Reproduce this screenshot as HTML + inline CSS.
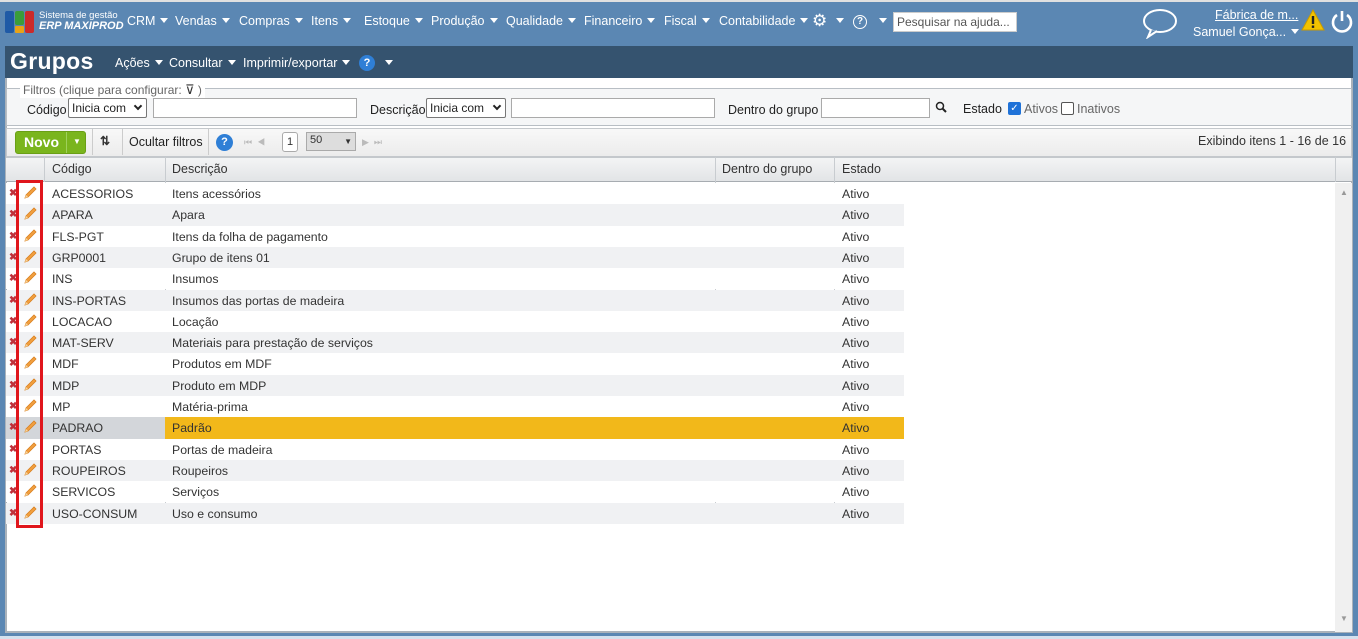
<!DOCTYPE html>
<html><head><meta charset="utf-8"><style>
*{box-sizing:border-box;margin:0;padding:0}
body{width:1358px;height:639px;overflow:hidden;background:#d4e1ee;font-family:"Liberation Sans",sans-serif;font-size:12.3px;color:#333;position:relative}
.abs{position:absolute;white-space:nowrap}
#top{left:0;top:0;width:1358px;height:44px;background:#5b87b3;border-top:2px solid #e0e0e0}
.menu{color:#fff;font-size:12.5px;top:14px}
.tri{display:inline-block;border-left:4px solid transparent;border-right:4px solid transparent;border-top:5px solid #fff;vertical-align:middle;margin-left:5px;margin-top:-2px}
#frame{left:0;top:44px;width:1358px;height:592px;background:#5b87b3}
#inner{left:5px;top:46px;width:1348px;height:587px;border:2px solid #aab2ba;background:#fff}
#title{left:5px;top:46px;width:1348px;height:32px;background:#35536f}
.tb{color:#fff;font-size:12.5px;top:56px}
#filters{left:6px;top:88px;width:1346px;height:38px;border:1px solid #b8bec4;background:#f5f6f7}
.lbl{font-size:12.5px;color:#222}
.sel{border:1px solid #777;border-radius:2px;background:#fff;height:20px;font-size:12px;padding:2px 3px;color:#222;overflow:hidden}
.inp{border:1px solid #aaa;background:#fff;height:20px}
#tool{left:6px;top:128px;width:1346px;height:29px;background:linear-gradient(#f8f8f8,#ececec);border:1px solid #c4c8cc}
#head{left:6px;top:157px;width:1346px;height:25px;background:linear-gradient(#f3f4f5,#e2e4e6);border-top:1px solid #c4c8cc;border-bottom:1px solid #a7acb1}
.hc{top:162px;font-size:12.5px;color:#333}
.vl{width:1px;background:#c8ccd0}
.row{left:6px;width:898px;height:21.3px}
.cell{font-size:12.3px;color:#333}
.chev{position:absolute;right:5px;top:4px;width:6px;height:6px;border-right:2px solid #222;border-bottom:2px solid #222;transform:rotate(45deg)}
</style></head><body>
<div id="top" class="abs"></div>
<div class="abs" style="left:5px;top:11px;width:9px;height:22px;background:#1f5aa6;border-radius:2px"></div>
<div class="abs" style="left:15px;top:11px;width:9px;height:14px;background:#3a9d3a;border-radius:2px"></div>
<div class="abs" style="left:15px;top:26px;width:9px;height:7px;background:#e8a317;border-radius:1px"></div>
<div class="abs" style="left:25px;top:11px;width:9px;height:22px;background:#cc2a2a;border-radius:2px"></div>
<div class="abs" style="left:39px;top:10px;color:#fff;font-size:9.5px;line-height:11px">Sistema de gestão<br><i style="font-size:11px;font-weight:bold">ERP MAXIPROD</i></div>
<div class="abs menu" style="left:127px">CRM<span class="tri"></span></div>
<div class="abs menu" style="left:175px">Vendas<span class="tri"></span></div>
<div class="abs menu" style="left:239px">Compras<span class="tri"></span></div>
<div class="abs menu" style="left:311px">Itens<span class="tri"></span></div>
<div class="abs menu" style="left:364px">Estoque<span class="tri"></span></div>
<div class="abs menu" style="left:431px">Produção<span class="tri"></span></div>
<div class="abs menu" style="left:506px">Qualidade<span class="tri"></span></div>
<div class="abs menu" style="left:584px">Financeiro<span class="tri"></span></div>
<div class="abs menu" style="left:664px">Fiscal<span class="tri"></span></div>
<div class="abs menu" style="left:719px">Contabilidade<span class="tri"></span></div>
<div class="abs menu" style="left:812px;top:11px;font-size:17px">⚙<span class="tri" style="margin-left:9px"></span></div>
<div class="abs" style="left:853px;top:15px;width:14px;height:14px;border:1.5px solid #fff;border-radius:50%;color:#fff;font-size:10px;text-align:center;line-height:11px;font-weight:bold">?</div>
<div class="abs menu" style="left:874px"><span class="tri"></span></div>
<div class="abs" style="left:893px;top:12px;width:124px;height:20px;background:#fff;border:1px solid #ccc;font-size:12px;color:#555;padding:2px 3px;overflow:hidden">Pesquisar na ajuda...</div>
<svg class="abs" style="left:1141px;top:7px" width="38" height="32"><ellipse cx="19" cy="14" rx="16" ry="11" fill="none" stroke="#fff" stroke-width="2"/><path d="M10 23 L7 30 L16 24" fill="#5b87b3" stroke="#fff" stroke-width="2"/></svg>
<div class="abs" style="left:1215px;top:8px;color:#fff;font-size:12.5px;text-decoration:underline">Fábrica de m...</div>
<div class="abs" style="left:1193px;top:25px;color:#fff;font-size:12.5px">Samuel Gonça...<span class="tri"></span></div>
<svg class="abs" style="left:1301px;top:9px" width="24" height="22"><path d="M12 1 L23 21 L1 21 Z" fill="#f2c200" stroke="#c89a00"/><rect x="10.8" y="7" width="2.4" height="8" fill="#222"/><rect x="10.8" y="16.5" width="2.4" height="2.4" fill="#222"/></svg>
<svg class="abs" style="left:1330px;top:10px" width="24" height="24"><path d="M7 5 A9 9 0 1 0 17 5" fill="none" stroke="#fff" stroke-width="2.6"/><line x1="12" y1="1" x2="12" y2="11" stroke="#fff" stroke-width="2.6"/></svg>

<div id="frame" class="abs"></div>
<div id="inner" class="abs"></div>
<div id="title" class="abs"></div>
<div class="abs" style="left:10px;top:48px;color:#fff;font-size:23px;font-weight:bold;letter-spacing:0.3px">Grupos</div>
<div class="abs tb" style="left:115px">Ações<span class="tri"></span></div>
<div class="abs tb" style="left:169px">Consultar<span class="tri"></span></div>
<div class="abs tb" style="left:243px">Imprimir/exportar<span class="tri"></span></div>
<div class="abs" style="left:359px;top:55px;width:16px;height:16px;border-radius:50%;background:#2f7fd6;color:#fff;font-size:11px;font-weight:bold;text-align:center;line-height:16px">?</div>
<div class="abs tb" style="left:380px"><span class="tri"></span></div>

<div id="filters" class="abs"></div>
<div class="abs" style="left:20px;top:82px;background:#fff;font-size:12px;color:#666;padding:0 3px">Filtros (clique para configurar: <span style="font-size:13px;color:#333">⊽</span> )</div>
<div class="abs lbl" style="left:27px;top:103px">Código</div>
<div class="abs sel" style="left:68px;top:98px;width:79px">Inicia com<span class="chev"></span></div>
<div class="abs inp" style="left:153px;top:98px;width:204px"></div>
<div class="abs lbl" style="left:370px;top:103px">Descrição</div>
<div class="abs sel" style="left:426px;top:98px;width:80px">Inicia com<span class="chev"></span></div>
<div class="abs inp" style="left:511px;top:98px;width:204px"></div>
<div class="abs lbl" style="left:728px;top:103px">Dentro do grupo</div>
<div class="abs inp" style="left:821px;top:98px;width:109px"></div>
<svg class="abs" style="left:935px;top:101px" width="12" height="12"><circle cx="5" cy="5" r="3.5" fill="none" stroke="#222" stroke-width="1.5"/><line x1="7.5" y1="7.5" x2="11" y2="11" stroke="#222" stroke-width="2"/></svg>
<div class="abs lbl" style="left:963px;top:102px">Estado</div>
<div class="abs" style="left:1008px;top:102px;width:13px;height:13px;background:#1f72d8;border-radius:2px;color:#fff;font-size:10px;text-align:center;line-height:13px">✓</div>
<div class="abs lbl" style="left:1024px;top:102px;color:#666">Ativos</div>
<div class="abs" style="left:1061px;top:102px;width:13px;height:13px;border:1px solid #555;border-radius:2px;background:#fff"></div>
<div class="abs lbl" style="left:1077px;top:102px;color:#666">Inativos</div>

<div id="tool" class="abs"></div>
<div class="abs" style="left:15px;top:131px;width:71px;height:23px;background:#7ab51d;border-radius:3px;border:1px solid #6a9f16"></div>
<div class="abs" style="left:24px;top:134px;color:#fff;font-weight:bold;font-size:14px">Novo</div>
<div class="abs" style="left:66px;top:132px;width:1px;height:21px;background:#9fd05a"></div>
<div class="abs" style="left:73px;top:137px;color:#fff;font-size:8px">▼</div>
<div class="abs" style="left:92px;top:129px;width:1px;height:26px;background:#ccc"></div>
<div class="abs" style="left:100px;top:134px;font-size:12px;color:#333;font-weight:bold">⇅</div>
<div class="abs" style="left:122px;top:129px;width:1px;height:26px;background:#ccc"></div>
<div class="abs lbl" style="left:129px;top:135px">Ocultar filtros</div>
<div class="abs" style="left:208px;top:129px;width:1px;height:26px;background:#ccc"></div>
<div class="abs" style="left:216px;top:134px;width:17px;height:17px;border-radius:50%;background:#2f7fd6;color:#fff;font-size:11px;font-weight:bold;text-align:center;line-height:17px">?</div>
<div class="abs" style="left:244px;top:137px;color:#bbb;font-size:9px">⏮ &nbsp;◀</div>
<div class="abs" style="left:282px;top:132px;width:16px;height:20px;border:1px solid #aaa;border-radius:3px;background:#fff;font-size:11px;text-align:center;line-height:18px">1</div>
<div class="abs" style="left:306px;top:132px;width:50px;height:19px;border:1px solid #aaa;background:#ddd;font-size:11px;padding:1px 3px">50<span style="position:absolute;right:3px;top:4px;font-size:8px">▼</span></div>
<div class="abs" style="left:362px;top:137px;color:#bbb;font-size:9px">▶ &nbsp;⏭</div>
<div class="abs lbl" style="left:1198px;top:134px;color:#333">Exibindo itens 1 - 16 de 16</div>

<div id="head" class="abs"></div>
<div class="abs hc" style="left:52px">Código</div>
<div class="abs hc" style="left:172px">Descrição</div>
<div class="abs hc" style="left:722px">Dentro do grupo</div>
<div class="abs hc" style="left:842px">Estado</div>
<div class="abs vl" style="left:44px;top:157px;height:25px"></div>
<div class="abs vl" style="left:165px;top:157px;height:367px"></div>
<div class="abs vl" style="left:715px;top:157px;height:367px"></div>
<div class="abs vl" style="left:834px;top:157px;height:367px"></div>
<div class="abs vl" style="left:1335px;top:157px;height:25px"></div>
<div class="abs" style="left:1335px;top:183px;width:17px;height:449px;background:#f0f0f0"></div>
<div class="abs" style="left:1340px;top:188px;font-size:8px;color:#999">▲</div>
<div class="abs" style="left:1340px;top:614px;font-size:8px;color:#999">▼</div>

<div id="rows"></div>
<script>
var d=[["ACESSORIOS","Itens acessórios"],["APARA","Apara"],["FLS-PGT","Itens da folha de pagamento"],["GRP0001","Grupo de itens 01"],["INS","Insumos"],["INS-PORTAS","Insumos das portas de madeira"],["LOCACAO","Locação"],["MAT-SERV","Materiais para prestação de serviços"],["MDF","Produtos em MDF"],["MDP","Produto em MDP"],["MP","Matéria-prima"],["PADRAO","Padrão"],["PORTAS","Portas de madeira"],["ROUPEIROS","Roupeiros"],["SERVICOS","Serviços"],["USO-CONSUM","Uso e consumo"]];
var h="";
d.forEach(function(r,i){var y=183+i*21.3;var sel=i==11;
var bg=sel?"#f2b81a":(i%2?"#f0f1f3":"#fff");
h+='<div class="abs row" style="top:'+y+'px;background:'+bg+'"></div>';
if(sel)h+='<div class="abs" style="left:6px;top:'+y+'px;width:159px;height:21.3px;background:#d3d6da"></div>';
h+='<div class="abs" style="left:9px;top:'+(y+5)+'px;color:#c0303a;font-size:10px;font-weight:bold">✖</div>';
h+='<svg class="abs" style="left:23px;top:'+(y+3)+'px" width="14" height="14"><path d="M2 12 L3 9 L11 1 L13 3 L5 11 Z" fill="#f2a040" stroke="#d98020" stroke-width=".8"/><path d="M2 12 L3 9 L5 11Z" fill="#f5d5a0"/></svg>';
h+='<div class="abs cell" style="left:52px;top:'+(y+4)+'px">'+r[0]+'</div>';
h+='<div class="abs cell" style="left:172px;top:'+(y+4)+'px">'+r[1]+'</div>';
h+='<div class="abs cell" style="left:842px;top:'+(y+4)+'px">Ativo</div>';});
document.getElementById("rows").innerHTML=h;
</script>
<div class="abs" style="left:16px;top:180px;width:27px;height:348px;border:3px solid #e0161c"></div>
</body></html>
